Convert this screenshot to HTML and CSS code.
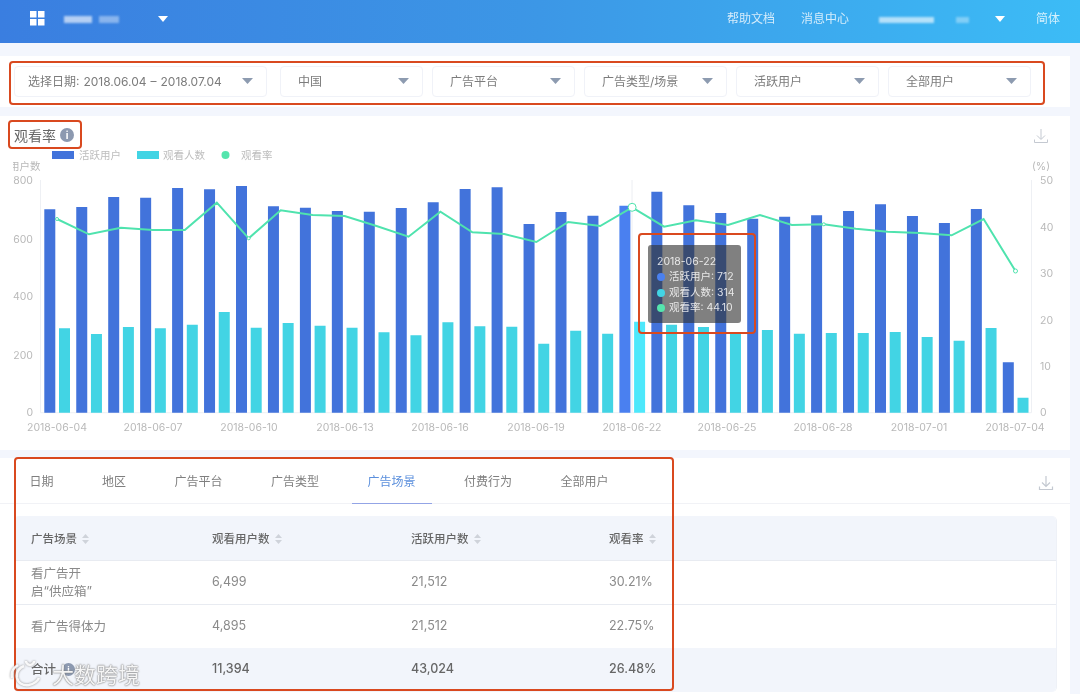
FILE: index.html
```html
<!DOCTYPE html>
<html lang="zh">
<head>
<meta charset="utf-8">
<title>观看率</title>
<link rel="stylesheet" href="styles.css">
</head>
<body>
<div class="page">
  <header class="topbar">
    <svg class="apps" width="15" height="15" viewBox="0 0 15 15"><path d="M0 0h6.500v6.500H0zM8 0h6.500v6.500H8zM0 8h6.500v6.500H0zM8 8h6.500v6.500H8z"/></svg>
    <span class="blur b1"></span><span class="blur b2"></span>
    <svg class="caret caret-app" width="10" height="6" viewBox="0 0 10 6"><path d="M0 0h10L5 6z"/></svg>
    <nav class="topnav">
      <span class="navlink">帮助文档</span>
      <span class="navlink">消息中心</span>
      <span class="blur b3"></span><span class="blur b4"></span>
      <svg class="caret caret-user" width="10" height="6" viewBox="0 0 10 6"><path d="M0 0h10L5 6z"/></svg>
      <span class="navlink lang">简体</span>
    </nav>
  </header>

  <main class="content">
    <section class="card filters">
      <div class="select select-date"><span>选择日期: 2018.06.04 – 2018.07.04</span><svg class="sel-arrow" width="11" height="6" viewBox="0 0 11 6"><path d="M0 0h11L5.500 6z"/></svg></div>
      <div class="select"><span>中国</span><svg class="sel-arrow" width="11" height="6" viewBox="0 0 11 6"><path d="M0 0h11L5.500 6z"/></svg></div>
      <div class="select"><span>广告平台</span><svg class="sel-arrow" width="11" height="6" viewBox="0 0 11 6"><path d="M0 0h11L5.500 6z"/></svg></div>
      <div class="select"><span>广告类型/场景</span><svg class="sel-arrow" width="11" height="6" viewBox="0 0 11 6"><path d="M0 0h11L5.500 6z"/></svg></div>
      <div class="select"><span>活跃用户</span><svg class="sel-arrow" width="11" height="6" viewBox="0 0 11 6"><path d="M0 0h11L5.500 6z"/></svg></div>
      <div class="select"><span>全部用户</span><svg class="sel-arrow" width="11" height="6" viewBox="0 0 11 6"><path d="M0 0h11L5.500 6z"/></svg></div>
    </section>

    <section class="card chart-card">
      <div class="chart-head">
        <h2 class="chart-title">观看率</h2>
        <span class="info">i</span>
        <svg class="dl dl-chart" width="16" height="16" viewBox="0 0 16 16"><path d="M8 1v10M4 7.500 8 11.500l4-4M1.500 11.500v3h13v-3"/></svg>
      </div>
      <svg class="chart" width="1070" height="302" viewBox="0 148 1070 302">
        <rect class="s-blue" x="52" y="151" width="22" height="8"/>
        <text class="lg" x="79" y="159">活跃用户</text>
        <rect class="s-teal" x="137" y="151" width="22" height="8"/>
        <text class="lg" x="163" y="159">观看人数</text>
        <circle class="s-green" cx="225.500" cy="155" r="4"/>
        <text class="lg" x="241" y="159">观看率</text>

        <svg x="13" y="158" width="30" height="16"><text class="ax" x="-4" y="12">用户数</text></svg>
        <text class="ax" x="1032" y="170">(%)</text>

        <path class="axis" d="M40.500 180V412.700H1031.500V180"/>
        <path class="hover-line" d="M632 180V412"/>

        <text class="ax end" x="33" y="184">800</text>
        <text class="ax end" x="33" y="242.500">600</text>
        <text class="ax end" x="33" y="300">400</text>
        <text class="ax end" x="33" y="359">200</text>
        <text class="ax end" x="33" y="416">0</text>

        <text class="ax" x="1040" y="184">50</text>
        <text class="ax" x="1040" y="231">40</text>
        <text class="ax" x="1040" y="277">30</text>
        <text class="ax" x="1040" y="324">20</text>
        <text class="ax" x="1040" y="370">10</text>
        <text class="ax" x="1040" y="416">0</text>

        <path class="bars-blue" d="M49.800 412.700V209.300M81.750 412.700V207M113.700 412.700V197M145.650 412.700V197.700M177.600 412.700V188M209.550 412.700V189.300M241.500 412.700V186M273.450 412.700V206.300M305.400 412.700V207.700M337.350 412.700V211M369.300 412.700V211.700M401.250 412.700V208M433.200 412.700V202.300M465.150 412.700V189M497.100 412.700V187.300M529.050 412.700V224M561 412.700V212M592.950 412.700V215.700M656.850 412.700V191.700M688.800 412.700V205.300M720.750 412.700V213M752.700 412.700V218.700M784.650 412.700V216.700M816.600 412.700V215.300M848.550 412.700V211M880.500 412.700V204.300M912.450 412.700V216M944.400 412.700V223M976.350 412.700V209M1008.300 412.700V362.300"/>
        <path class="bars-blue hot" d="M624.900 412.700V205.700"/>
        <path class="bars-teal" d="M64.500 412.700V328.300M96.450 412.700V334M128.400 412.700V327M160.350 412.700V328.300M192.300 412.700V324.700M224.250 412.700V312M256.200 412.700V327.700M288.150 412.700V323M320.100 412.700V325.700M352.050 412.700V327.700M384 412.700V332.300M415.950 412.700V335.300M447.900 412.700V322.300M479.850 412.700V326.300M511.800 412.700V326.700M543.750 412.700V343.700M575.700 412.700V330.700M607.650 412.700V333.700M671.550 412.700V324.700M703.500 412.700V327M735.450 412.700V333.700M767.400 412.700V330M799.350 412.700V333.700M831.300 412.700V333M863.250 412.700V333M895.200 412.700V332M927.150 412.700V337M959.100 412.700V340.700M991.050 412.700V328M1023 412.700V397.700"/>
        <path class="bars-teal hot" d="M639.600 412.700V321.700"/>

        <polyline class="rate" points="57,219 89,234.300 120.900,227.700 152.900,230 184.800,230 216.800,202.700 248.700,238.300 280.700,210.300 312.600,215 344.600,216 376.500,226 408.500,236.700 440.400,211.700 472.400,232.300 504.300,234 536.300,242 568.200,222 600.200,226 632.100,207.300 664.100,226.700 696,220.300 728,225 759.900,215 791.900,225 823.800,224.300 855.800,228.700 887.700,231.700 919.700,233 951.600,235.300 983.600,219 1015.500,271"/>
        <circle class="pt" cx="57" cy="219" r="1.500"/>
        <circle class="pt" cx="248.700" cy="238.300" r="1.500"/>
        <circle class="pt" cx="823.800" cy="224.300" r="1.500"/>
        <circle class="pt" cx="1015.500" cy="271" r="2"/>
        <circle class="pt-hot" cx="632.100" cy="207.300" r="4"/>

        <text class="ax mid" x="57" y="431">2018-06-04</text>
        <text class="ax mid" x="153" y="431">2018-06-07</text>
        <text class="ax mid" x="249" y="431">2018-06-10</text>
        <text class="ax mid" x="345" y="431">2018-06-13</text>
        <text class="ax mid" x="440" y="431">2018-06-16</text>
        <text class="ax mid" x="536" y="431">2018-06-19</text>
        <text class="ax mid" x="632" y="431">2018-06-22</text>
        <text class="ax mid" x="727" y="431">2018-06-25</text>
        <text class="ax mid" x="823" y="431">2018-06-28</text>
        <text class="ax mid" x="919" y="431">2018-07-01</text>
        <text class="ax mid" x="1015" y="431">2018-07-04</text>
      </svg>
      <div class="tooltip">
        <div class="tt-date">2018-06-22</div>
        <div class="tt-row"><i class="dot d-blue"></i>活跃用户: 712</div>
        <div class="tt-row"><i class="dot d-teal"></i>观看人数: 314</div>
        <div class="tt-row"><i class="dot d-green"></i>观看率: 44.10</div>
      </div>
    </section>

    <section class="card table-card">
      <div class="tabs">
        <span class="tab">日期</span>
        <span class="tab">地区</span>
        <span class="tab">广告平台</span>
        <span class="tab">广告类型</span>
        <span class="tab active">广告场景</span>
        <span class="tab">付费行为</span>
        <span class="tab">全部用户</span>
        <svg class="dl dl-table" width="16" height="16" viewBox="0 0 16 16"><path d="M8 1v10M4 7.500 8 11.500l4-4M1.500 11.500v3h13v-3"/></svg>
      </div>
      <div class="table">
        <div class="row head">
          <div>广告场景<svg class="sort" width="7" height="10" viewBox="0 0 7 10"><path d="M3.500 0 7 4H0zM0 6h7l-3.500 4z"/></svg></div>
          <div>观看用户数<svg class="sort" width="7" height="10" viewBox="0 0 7 10"><path d="M3.500 0 7 4H0zM0 6h7l-3.500 4z"/></svg></div>
          <div>活跃用户数<svg class="sort" width="7" height="10" viewBox="0 0 7 10"><path d="M3.500 0 7 4H0zM0 6h7l-3.500 4z"/></svg></div>
          <div>观看率<svg class="sort" width="7" height="10" viewBox="0 0 7 10"><path d="M3.500 0 7 4H0zM0 6h7l-3.500 4z"/></svg></div>
        </div>
        <div class="row r1">
          <div class="wrap-cell">看广告开<br>启“供应箱”</div><div>6,499</div><div>21,512</div><div>30.21%</div>
        </div>
        <div class="row r2">
          <div>看广告得体力</div><div>4,895</div><div>21,512</div><div>22.75%</div>
        </div>
        <div class="row total">
          <div>合计<span class="info info-sm">i</span></div><div>11,394</div><div>43,024</div><div>26.48%</div>
        </div>
      </div>
    </section>
  </main>

  <div class="mark m-filter"></div>
  <div class="mark m-title"></div>
  <div class="mark m-tip"></div>
  <div class="mark m-table"></div>

  <div class="watermark">
    <svg width="36" height="28" viewBox="0 0 36 28"><path d="M9 4C4 7 2 12 3 17M15 5c-5 2-8 6-7 12 1 5 6 8 12 7 5-1 8-3 10-7"/><path d="M21 4a4 4 0 1 1 .1 0z"/></svg>
    <span>大数跨境</span>
  </div>
</div>
</body>
</html>
```

FILE: styles.css
```css
* { box-sizing: border-box; }
html, body { margin: 0; padding: 0; }
body {
  background: #f3f6fd;
  font-family: Inter, "Noto Sans CJK SC", sans-serif;
  color: #777;
}
.page { position: relative; width: 1080px; height: 694px; overflow: hidden; filter: blur(.35px); }

/* top bar */
.topbar {
  display: flex;
  align-items: center;
  height: 43px;
  padding: 0 0 6px 30px;
  background: linear-gradient(90deg, #3a7ee0 0%, #3c97e6 50%, #3cbcf6 100%);
}
.apps { fill: #fff; margin-right: 19px; }
.blur { display: block; height: 7px; margin-top: 2px; background: rgba(255, 255, 255, .62); filter: blur(1.2px); }
.b1 { width: 28px; }
.b2 { width: 20px; margin-left: 7px; background: rgba(255, 255, 255, .4); }
.caret { fill: #fff; flex: none; }
.caret-app { margin-left: 39px; }
.topnav { display: flex; align-items: center; margin-left: auto; padding-right: 20px; }
.navlink { font-size: 12px; color: rgba(255, 255, 255, .78); padding-bottom: 3px; }
.navlink + .navlink { margin-left: 26px; }
.b3 { width: 55px; margin-left: 30px; height: 6px; }
.b4 { width: 13px; margin-left: 22px; height: 6px; background: rgba(255, 255, 255, .35); }
.caret-user { margin-left: 26px; }
.navlink.lang { margin-left: 31px; }

/* cards */
.content { width: 1070px; padding-top: 13px; }
.card { background: #fff; }

.filters {
  display: flex;
  gap: 9px;
  height: 51px;
  padding: 10px 0 0 14px;
  margin-bottom: 9px;
}
.select {
  display: flex;
  align-items: center;
  justify-content: space-between;
  width: 143px;
  height: 31px;
  padding: 0 13px 2px 17px;
  border: 1px solid #f0f2f8;
  border-radius: 4px;
  font-size: 12px;
  color: #7c7c7c;
}
.select-date { width: 253px; margin-right: 4px; padding-left: 13px; word-spacing: .6px; }
.sel-arrow { fill: #8d9bb0; flex: none; }

/* chart */
.chart-card { position: relative; height: 334px; margin-bottom: 8px; }
.chart-head { display: flex; align-items: center; height: 32px; padding: 5px 21px 0 14px; }
.chart-title { margin: 0; font-size: 14px; font-weight: 400; color: #666; }
.info {
  display: inline-flex;
  align-items: center;
  justify-content: center;
  width: 14px;
  height: 14px;
  margin-left: 4px;
  border-radius: 50%;
  background: #8c99b0;
  color: #fff;
  font-size: 10px;
  font-weight: 700;
}
.dl { fill: none; stroke: #c4c9d1; stroke-width: 1; flex: none; }
.dl-chart { margin-left: auto; margin-top: 2px; }
.chart { display: block; }
.chart text { font-family: Inter, "Noto Sans CJK SC", sans-serif; }
.lg { font-size: 10.5px; fill: #bdbdbd; }
.ax { font-size: 10.5px; fill: #b9b9b9; }
.end { text-anchor: end; }
.mid { text-anchor: middle; }
.axis { fill: none; stroke: #eef0f4; stroke-width: 1; }
.hover-line { fill: none; stroke: #eceef2; stroke-width: 1; }
.s-blue { fill: #4273db; }
.s-teal { fill: #42d4e4; }
.s-green { fill: #55e5ad; }
.bars-blue { fill: none; stroke: #4273db; stroke-width: 11; }
.bars-blue.hot { stroke: #4a80f0; }
.bars-teal { fill: none; stroke: #42d4e4; stroke-width: 11; }
.bars-teal.hot { stroke: #4de8fb; }
.rate { fill: none; stroke: #4fe3ae; stroke-width: 2; }
.pt { fill: #fff; stroke: #4fe3ae; stroke-width: 1; }
.pt-hot { fill: #fff; stroke: #4fe3ae; stroke-width: 1; }

.tooltip {
  position: absolute;
  left: 648px;
  top: 129px;
  width: 93px;
  height: 78px;
  padding: 9px 0 0 9px;
  border-radius: 3px;
  background: rgba(50, 50, 50, .62);
  color: rgba(255, 255, 255, .82);
  font-size: 10.5px;
  line-height: 15.400px;
  white-space: nowrap;
}
.tt-row { display: flex; align-items: center; }
.dot { width: 8px; height: 8px; margin-right: 4px; border-radius: 50%; flex: none; }
.d-blue { background: #4a80f0; }
.d-teal { background: #42d4e4; }
.d-green { background: #55e5ad; }

/* tabs + table */
.table-card { height: 236px; }
.tabs {
  display: flex;
  align-items: stretch;
  gap: 16.500px;
  height: 46px;
  padding: 0 16px 0 13.500px;
  border-bottom: 1px solid #f1f2f6;
}
.tab {
  display: flex;
  align-items: center;
  padding: 0 16px;
  margin-bottom: -1px;
  font-size: 12px;
  color: #7f7f7f;
  border-bottom: 1px solid transparent;
}
.tab.active { color: #5b8fdc; border-bottom-color: #93a4e6; }
.dl-table { margin: 17px 0 0 auto; stroke-width: 1.2; }

.table {
  width: 1043px;
  margin: 12px 0 0 14px;
  border-radius: 5px;
  overflow: hidden;
  border-right: 1px solid #eef1f7;
  border-left: 1px solid #eef1f7;
  font-size: 12.500px;
}
.row {
  display: grid;
  grid-template-columns: 181px 199px 198px 1fr;
  align-items: center;
  padding-left: 16px;
  color: #8a8a8a;
}
.head { height: 45px; background: #f2f5fb; border-bottom: 1px solid #e8ebf1; font-size: 11.500px; font-weight: 500; color: #666; }
.r1 { height: 44px; padding-bottom: 2px; line-height: 18px; border-bottom: 1px solid #e8ebf1; }
.wrap-cell { padding-top: 2px; }
.r2 { height: 43px; padding-bottom: 2px; }
.total { height: 44px; padding-bottom: 3px; background: #f2f5fb; color: #666; font-weight: 500; }
.sort { fill: #cfd3da; margin-left: 5px; vertical-align: -1px; }
.info-sm { width: 13px; height: 13px; font-size: 9px; vertical-align: 1px; margin-left: 6px; }

/* annotations */
.mark { position: absolute; border: 2px solid #d9491f; border-radius: 4px; pointer-events: none; }
.m-filter { left: 9px; top: 61px; width: 1036px; height: 44px; }
.m-title { left: 8px; top: 120px; width: 74px; height: 29px; }
.m-tip { left: 638px; top: 233px; width: 118px; height: 101px; }
.m-table { left: 14px; top: 457px; width: 660px; height: 234px; }

.watermark {
  position: absolute;
  left: 9px;
  top: 661px;
  display: flex;
  align-items: center;
  gap: 7px;
  color: rgba(255, 255, 255, .92);
  font-size: 22px;
  line-height: 28px;
  text-shadow: 0 0 2px #777, 0 0 1px #777;
}
.watermark svg { fill: none; stroke: rgba(255, 255, 255, .9); stroke-width: 2.500; filter: drop-shadow(0 0 1px #888); }
```
